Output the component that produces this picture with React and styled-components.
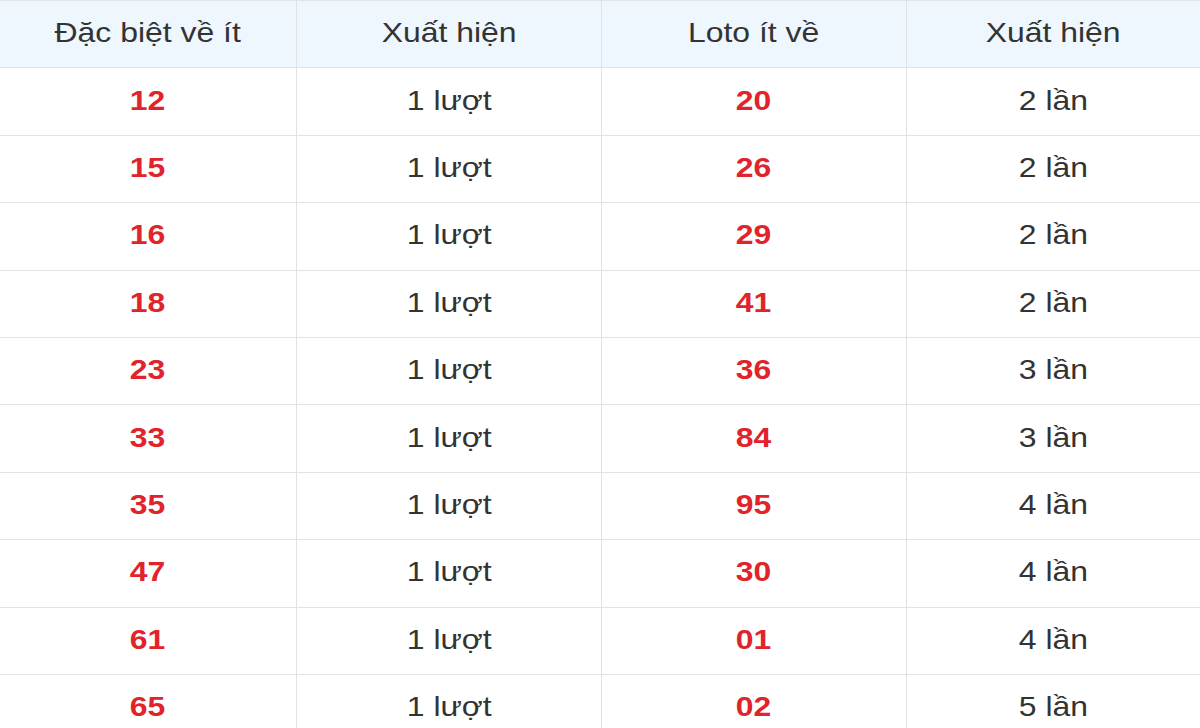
import * as React from 'react';
import styled, { createGlobalStyle } from 'styled-components';

const GlobalStyle = createGlobalStyle`
  html, body {
    margin: 0;
    padding: 0;
    background: #ffffff;
  }
  body {
    font-family: "Liberation Sans", Arial, sans-serif;
  }
`;

const Table = styled.div`
  display: grid;
  grid-template-columns: 297px 305px 305px 1fr;
  grid-auto-rows: 67.4px;
  width: 1200px;
  border-top: 1px solid #e2e4e8;
  box-sizing: border-box;
`;

const Cell = styled.div`
  display: flex;
  align-items: center;
  justify-content: center;
  box-sizing: border-box;
  border-bottom: 1px solid #e0e2e6;
  border-right: ${(p) => (p.$last ? 'none' : '1px solid #e0e2e6')};
  background: ${(p) => (p.$head ? '#eef6fe' : '#ffffff')};
  font-size: 28px;
  color: ${(p) => (p.$num ? '#e1232b' : '#333333')};
  font-weight: ${(p) => (p.$num ? 700 : 400)};
  padding-bottom: 2px;
`;

/* the source text is a touch wider than Arial */
const Label = styled.span`
  display: inline-block;
  transform: scaleX(1.14);
  white-space: nowrap;
`;

const headers = ['Đặc biệt về ít', 'Xuất hiện', 'Loto ít về', 'Xuất hiện'];

const rows = [
  ['12', '20', '2'],
  ['15', '26', '2'],
  ['16', '29', '2'],
  ['18', '41', '2'],
  ['23', '36', '3'],
  ['33', '84', '3'],
  ['35', '95', '4'],
  ['47', '30', '4'],
  ['61', '01', '4'],
  ['65', '02', '5'],
];

export default function App() {
  return (
    <>
      <GlobalStyle />
      <Table>
        {headers.map((h, i) => (
          <Cell key={i} $head $last={i === 3}>
            <Label>{h}</Label>
          </Cell>
        ))}
        {rows.map(([db, loto, times]) => (
          <React.Fragment key={db}>
            <Cell $num><Label>{db}</Label></Cell>
            <Cell><Label>1 lượt</Label></Cell>
            <Cell $num><Label>{loto}</Label></Cell>
            <Cell $last><Label>{times} lần</Label></Cell>
          </React.Fragment>
        ))}
      </Table>
    </>
  );
}
